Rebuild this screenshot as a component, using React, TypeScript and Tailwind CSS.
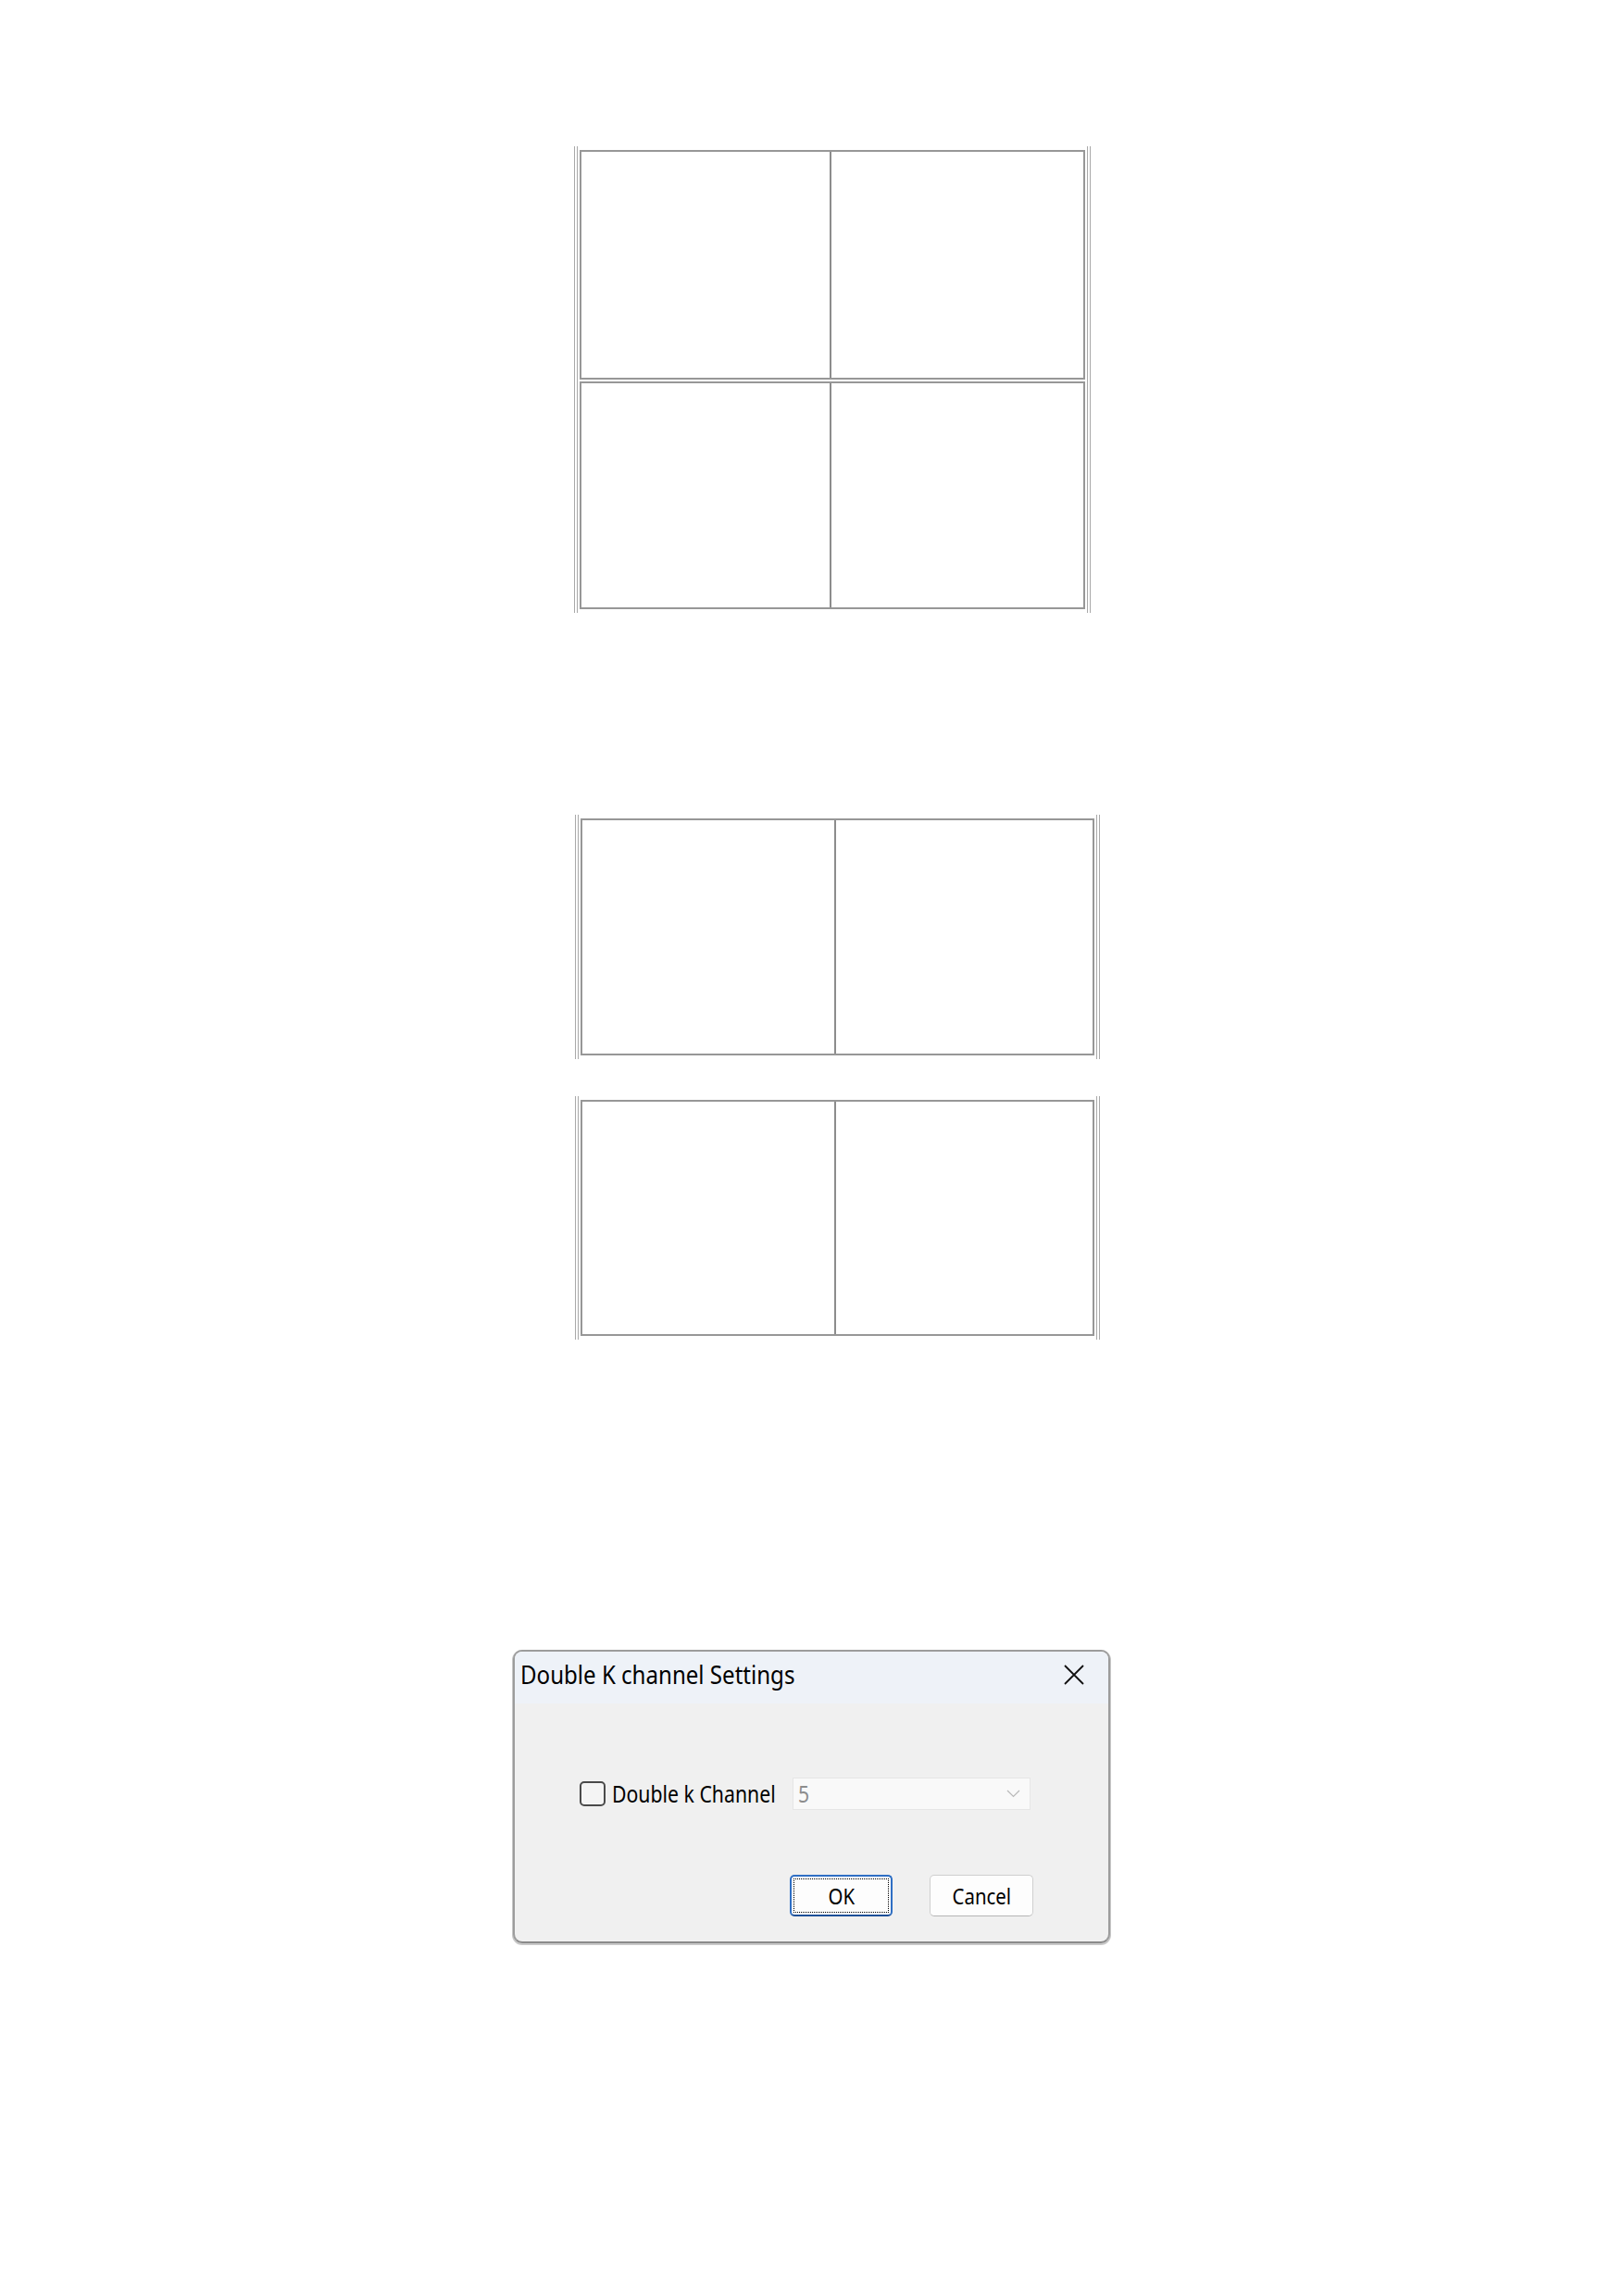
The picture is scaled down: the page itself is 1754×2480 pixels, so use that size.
// thin double guide lines that Word draws beside a table
function Guides({ className = '' }: { className?: string }) {
  return <div className={`w-[4px] self-stretch border-x border-[#a9a9a9] ${className}`} />
}

function TableRow({ height, left }: { height: string; left: string }) {
  return (
    <div className={`flex border-2 border-[#979797] ${height}`}>
      <div className={`border-r-2 border-[#8c8c8c] ${left}`} />
      <div className="flex-1" />
    </div>
  )
}

export default function App() {
  return (
    <div className="flex h-[2480px] w-[1754px] flex-col bg-white font-['Noto_Sans',sans-serif] text-black">
      {/* 2 x 2 table */}
      <div className="ml-[620px] mt-[158px] flex h-[504px]">
        <Guides />
        <div className="my-[4px] ml-[2px] flex w-[546px] flex-col gap-[2px]">
          <TableRow height="h-[248px]" left="w-[270px]" />
          <TableRow height="h-[246px]" left="w-[270px]" />
        </div>
        <Guides className="ml-[2px]" />
      </div>

      {/* two split tables */}
      <div className="ml-[621px] mt-[218px] flex h-[264px]">
        <Guides />
        <div className="my-[4px] ml-[2px] flex w-[555px] flex-col">
          <TableRow height="h-[256px]" left="w-[274px]" />
        </div>
        <Guides className="ml-[2px]" />
      </div>
      <div className="ml-[621px] mt-[40px] flex h-[263px]">
        <Guides />
        <div className="my-[4px] ml-[2px] flex w-[555px] flex-col">
          <TableRow height="h-[255px]" left="w-[274px]" />
        </div>
        <Guides className="ml-[2px]" />
      </div>

      {/* dialog */}
      <div className="ml-[554px] mt-[335px] flex h-[317px] w-[645px] flex-col overflow-hidden rounded-[10px] border-2 border-[#9c9c9c] border-b-[#8a8a8a] bg-[#f0f0f0] shadow-[0_1px_0_1px_#c8c8c8]">
        <div className="flex h-[56px] shrink-0 items-start justify-between bg-[#eef2f8] pl-[6px] pr-[26px] pt-[10px]">
          <span className="inline-block origin-left scale-x-[0.86] whitespace-nowrap text-[28px] leading-none">
            Double K channel Settings
          </span>
          <svg className="mt-[4px]" width="22" height="22" viewBox="0 0 22 22" fill="none">
            <path d="M1 1 21 21M21 1 1 21" stroke="#111" strokeWidth="1.8" />
          </svg>
        </div>

        <div className="ml-[70px] mt-[80px] flex h-[35px] items-center">
          <div className="flex w-[230px] items-center">
            <div className="h-[27px] w-[28px] shrink-0 rounded-[5px] border-2 border-[#4a4a4a] bg-[#f4f4f4]" />
            <span className="ml-[7px] inline-block origin-left scale-x-[0.85] whitespace-nowrap text-[25px] leading-none">
              Double k Channel
            </span>
          </div>
          <div className="flex h-[35px] w-[257px] items-center justify-between border border-[#e6e6e6] bg-[#f9f9f9] pl-[5px] pr-[10px]">
            <span className="inline-block origin-left scale-x-[0.85] text-[25px] leading-none text-[#8d8d8d]">5</span>
            <svg width="15" height="9" viewBox="0 0 15 9" fill="none">
              <polyline points="1,1 7.5,7.5 14,1" stroke="#b9b9b9" strokeWidth="1.2" />
            </svg>
          </div>
        </div>

        <div className="mr-[81px] mt-[70px] flex justify-end gap-[40px]">
          <button className="h-[45px] w-[111px] rounded-[5px] border-2 border-[#2f6fc4] border-b-[#1c4f98] bg-[#fdfdfd] p-[2px]">
            <div className="flex h-full items-center justify-center border border-dotted border-black">
              <span className="inline-block scale-x-[0.85] text-[24px] leading-none">OK</span>
            </div>
          </button>
          <button className="flex h-[45px] w-[112px] items-center justify-center rounded-[5px] border border-[#cfcfcf] border-b-[#b5b5b5] bg-[#fdfdfd]">
            <span className="inline-block scale-x-[0.85] text-[24px] leading-none">Cancel</span>
          </button>
        </div>
      </div>
    </div>
  )
}
